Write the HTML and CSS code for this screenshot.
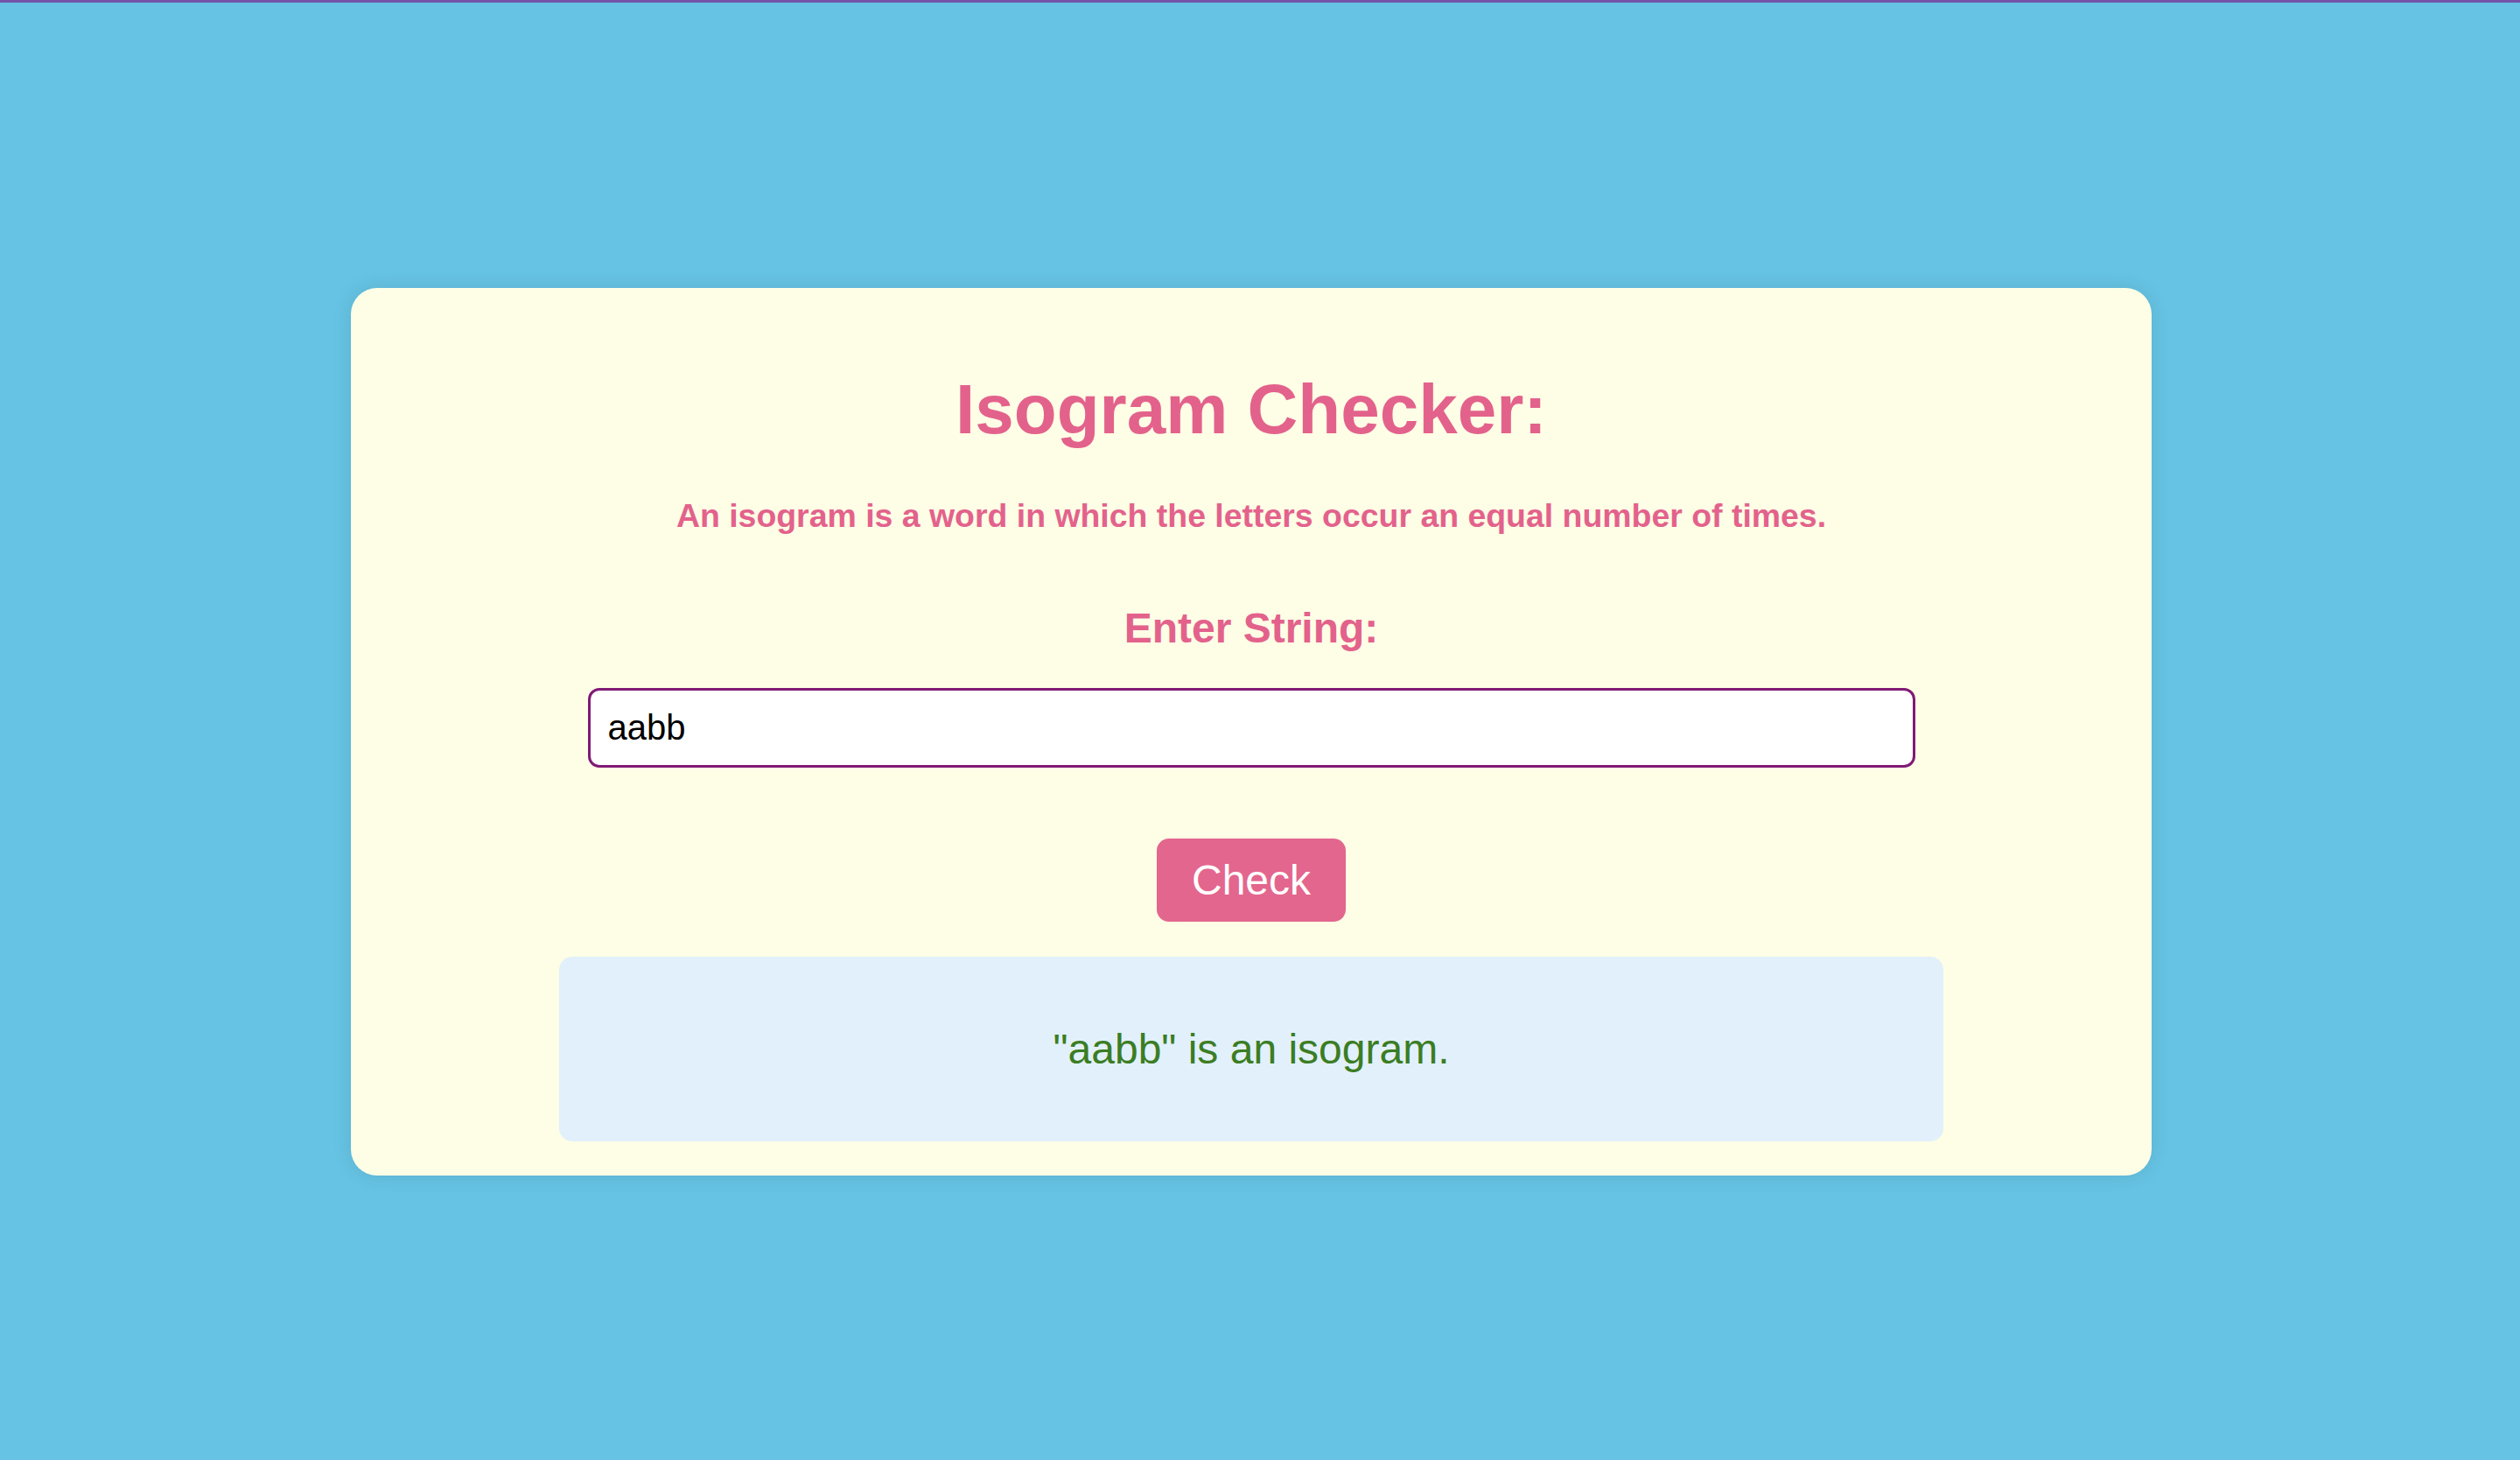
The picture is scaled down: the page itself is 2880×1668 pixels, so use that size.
FILE: index.html
```html
<!DOCTYPE html>
<html lang="en">
<head>
<meta charset="utf-8">
<title>Isogram Checker</title>
<link rel="stylesheet" href="styles.css">
</head>
<body>
  <main class="page">
    <section class="card">
      <h1 class="title">Isogram Checker:</h1>
      <h3 class="subtitle">An isogram is a word in which the letters occur an equal number of times.</h3>
      <h2 class="label">Enter String:</h2>
      <input class="field" type="text" value="aabb">
      <button class="check-btn" type="button">Check</button>
      <div class="result">
        <p class="result-text">"aabb" is an isogram.</p>
      </div>
    </section>
  </main>
</body>
</html>
```

FILE: styles.css
```css
html, body {
  margin: 0;
  padding: 0;
}

body {
  background: #66c3e4;
  font-family: "Liberation Sans", Arial, Helvetica, sans-serif;
  border-top: 3px solid #7453a8;
  min-height: 100vh;
  box-sizing: border-box;
}

.page {
  min-height: calc(100vh - 3px);
  display: flex;
  align-items: center;
  justify-content: center;
  padding-right: 20px;
}

.card {
  width: 2058px;
  box-sizing: border-box;
  background: #fdfee5;
  border-radius: 30px;
  box-shadow: 0 0 22px rgba(0, 0, 0, 0.1);
  padding: 40px 0 39px;
  display: flex;
  flex-direction: column;
  align-items: center;
  text-align: center;
}

.title {
  margin: 53px 0 0;
  font-size: 80px;
  font-weight: 700;
  color: #e3628c;
  line-height: 92px;
}

.subtitle {
  margin: 54px 0 0;
  font-size: 37.44px;
  font-weight: 700;
  color: #e3628c;
  line-height: 43px;
}

.label {
  margin: 79px 0 0;
  font-size: 48px;
  font-weight: 700;
  color: #e3628c;
  line-height: 55px;
}

.field {
  margin: 41px 0 0;
  width: 1517px;
  height: 91px;
  box-sizing: border-box;
  border: 3px solid #801a76;
  border-radius: 13px;
  background: #ffffff;
  padding: 0 20px;
  font-family: "Liberation Sans", Arial, Helvetica, sans-serif;
  font-size: 40px;
  color: #000000;
  outline: none;
}

.check-btn {
  margin: 81px 0 0;
  height: 95px;
  padding: 0 40px;
  border: none;
  border-radius: 14px;
  background: #e3668e;
  color: #ffffff;
  font-family: "Liberation Sans", Arial, Helvetica, sans-serif;
  font-size: 48px;
  line-height: 55px;
}

.result {
  margin: 40px 0 0;
  width: 1582px;
  box-sizing: border-box;
  background: #e2f0fc;
  border-radius: 15px;
  padding: 30px;
}

.result-text {
  margin: 48px 0;
  font-size: 48px;
  line-height: 55px;
  color: #3b7d23;
}
```
